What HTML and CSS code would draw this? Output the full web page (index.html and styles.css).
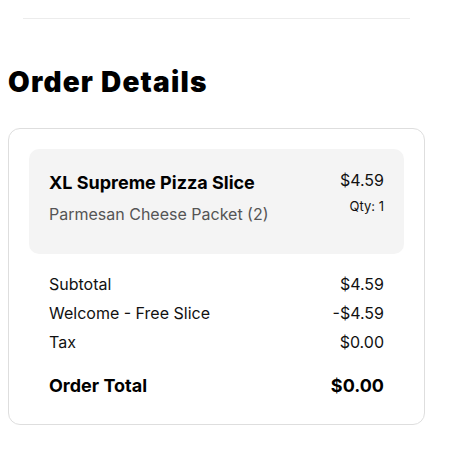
FILE: index.html
```html
<!DOCTYPE html>
<html>
<head>
<meta charset="utf-8">
<link rel="stylesheet" href="styles.css">
</head>
<body>
<div class="divider"></div>
<h1 class="title">Order Details</h1>
<div class="card">
  <div class="item">
    <div class="item-info">
      <div class="item-name">XL Supreme Pizza Slice</div>
      <div class="item-mod">Parmesan Cheese Packet (2)</div>
    </div>
    <div class="item-price">
      <div class="price">$4.59</div>
      <div class="qty">Qty: 1</div>
    </div>
  </div>
  <div class="summary">
    <div class="row"><span>Subtotal</span><span>$4.59</span></div>
    <div class="row"><span>Welcome - Free Slice</span><span>-$4.59</span></div>
    <div class="row"><span>Tax</span><span>$0.00</span></div>
    <div class="row total"><span>Order Total</span><span>$0.00</span></div>
  </div>
</div>
</body>
</html>
```
FILE: styles.css
```css
html, body {
  margin: 0;
  padding: 0;
  background: #fff;
}
body {
  font-family: Inter, "Liberation Sans", sans-serif;
  color: #111;
}
.divider {
  margin: 18px 0 0 23px;
  width: 387px;
  height: 1px;
  background: #ececec;
}
.title {
  margin: 47px 0 0 8px;
  font-family: Inter, "DejaVu Sans", sans-serif;
  font-weight: 900;
  font-size: 28px;
  line-height: 32px;
  color: #000;
  letter-spacing: 1.2px;
}
.card {
  margin: 30px 0 0 8px;
  width: 417px;
  box-sizing: border-box;
  border: 1px solid #dedede;
  border-radius: 12px;
  padding: 20px 20px 24px;
}
.item {
  display: flex;
  justify-content: space-between;
  background: #f4f4f4;
  border-radius: 10px;
  padding: 20px 20px 28px;
}
.item-name {
  font-size: 18px;
  font-weight: 700;
  line-height: 28px;
  color: #000;
}
.item-mod {
  margin-top: 5px;
  font-size: 16px;
  line-height: 24px;
  color: #555;
}
.item-price {
  text-align: right;
}
.price {
  font-size: 16px;
  line-height: 22px;
  color: #111;
}
.qty {
  margin-top: 6px;
  font-size: 13px;
  line-height: 18px;
  color: #111;
}
.summary {
  margin-top: 16px;
  padding: 0 20px;
}
.row {
  display: flex;
  justify-content: space-between;
  font-size: 16px;
  line-height: 29px;
}
.row.total {
  margin-top: 15px;
  font-size: 18px;
  font-weight: 700;
  line-height: 28px;
  color: #000;
}
```
